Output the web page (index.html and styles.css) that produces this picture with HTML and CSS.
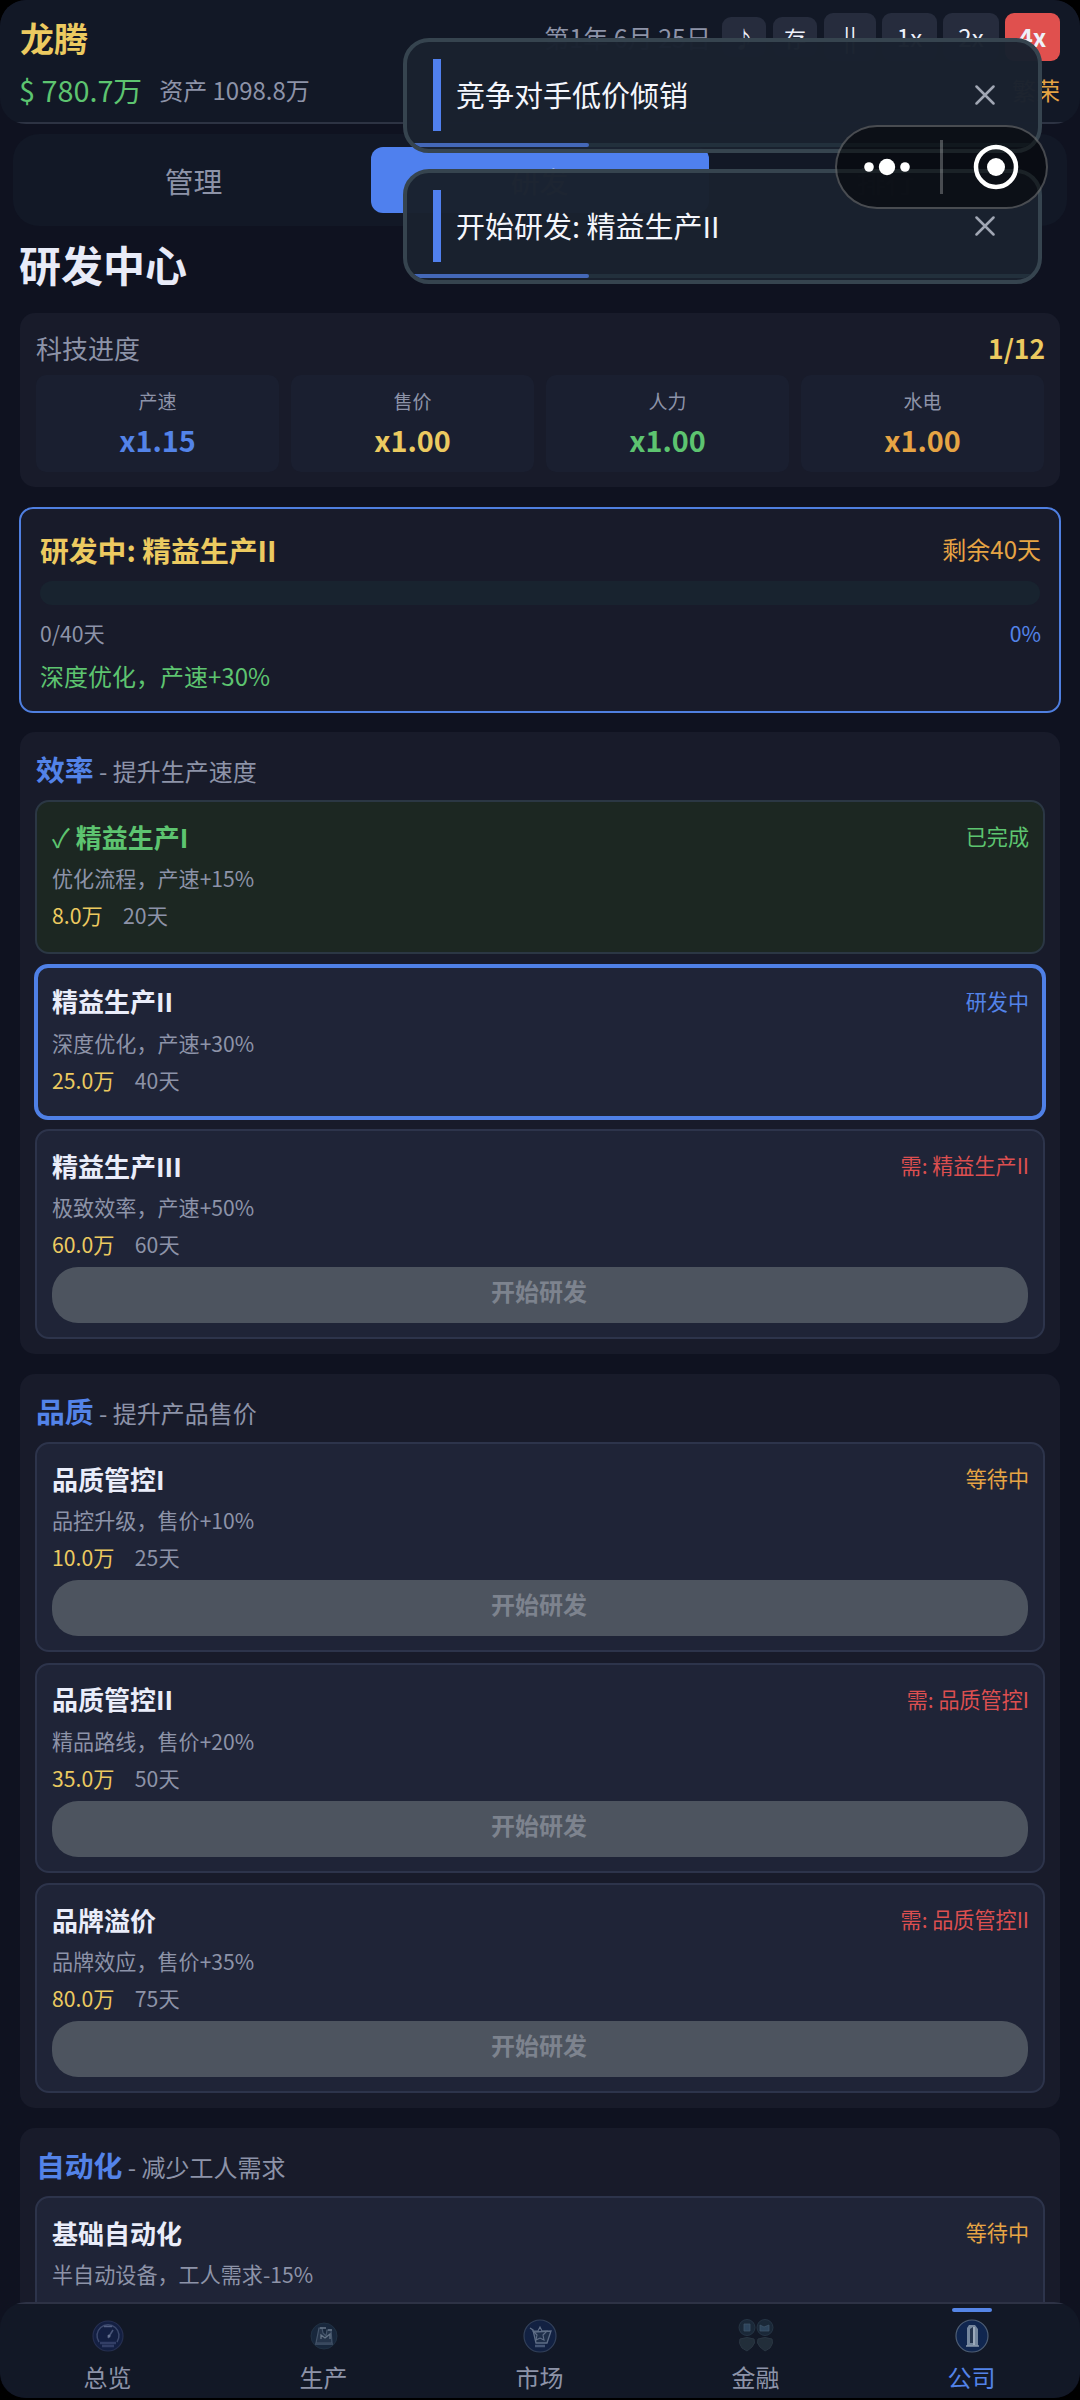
FILE: index.html
```html
<!DOCTYPE html>
<html lang="zh-CN">
<head>
<meta charset="utf-8">
<title>研发中心</title>
<link rel="stylesheet" href="styles.css">
</head>
<body>
<div class="screen">
  <header class="header">
    <div class="header-row">
      <div class="company">龙腾</div>
      <div class="controls">
        <span class="date">第1年 6月 25日</span>
        <button class="ctl ctl-small note">♪</button>
        <button class="ctl ctl-small save">存</button>
        <button class="ctl pause">||</button>
        <button class="ctl speed1">1x</button>
        <button class="ctl speed2">2x</button>
        <button class="ctl speed4">4x</button>
      </div>
    </div>
    <div class="header-row money-row">
      <div class="money"><span class="cash">$ 780.7万</span><span class="assets">资产 1098.8万</span></div>
      <span class="economy">繁荣</span>
    </div>
  </header>

  <main class="main">
    <nav class="tabs">
      <div class="tab">管理</div>
      <div class="tab tab-active">研发</div>
      <div class="tab">排行</div>
    </nav>
    <h1 class="title">研发中心</h1>

    <section class="panel progress-panel">
      <div class="row">
        <span class="panel-label">科技进度</span>
        <span class="count">1/12</span>
      </div>
      <div class="stats">
        <div class="stat"><span class="stat-name">产速</span><b class="blue">x1.15</b></div>
        <div class="stat"><span class="stat-name">售价</span><b class="yellow">x1.00</b></div>
        <div class="stat"><span class="stat-name">人力</span><b class="green">x1.00</b></div>
        <div class="stat"><span class="stat-name">水电</span><b class="orange">x1.00</b></div>
      </div>
    </section>

    <section class="current">
      <div class="row current-head">
        <span class="current-name">研发中: 精益生产II</span>
        <span class="current-left">剩余40天</span>
      </div>
      <div class="bar"></div>
      <div class="row current-days">
        <span>0/40天</span>
        <span class="blue">0%</span>
      </div>
      <div class="current-desc">深度优化，产速+30%</div>
    </section>

    <section class="panel group">
      <h2 class="group-head">效率<small> - 提升生产速度</small></h2>
      <div class="item item-done">
        <div class="row item-head"><span class="green"><span class="check">✓</span> 精益生产I</span><span class="tag green">已完成</span></div>
        <div class="desc">优化流程，产速+15%</div>
        <div class="cost"><span class="yellow">8.0万</span><span>20天</span></div>
      </div>
      <div class="item item-active">
        <div class="row item-head"><span>精益生产II</span><span class="tag blue">研发中</span></div>
        <div class="desc">深度优化，产速+30%</div>
        <div class="cost"><span class="yellow">25.0万</span><span>40天</span></div>
      </div>
      <div class="item">
        <div class="row item-head"><span>精益生产III</span><span class="tag red">需: 精益生产II</span></div>
        <div class="desc">极致效率，产速+50%</div>
        <div class="cost"><span class="yellow">60.0万</span><span>60天</span></div>
        <button class="start">开始研发</button>
      </div>
    </section>

    <section class="panel group">
      <h2 class="group-head">品质<small> - 提升产品售价</small></h2>
      <div class="item">
        <div class="row item-head"><span>品质管控I</span><span class="tag orange">等待中</span></div>
        <div class="desc">品控升级，售价+10%</div>
        <div class="cost"><span class="yellow">10.0万</span><span>25天</span></div>
        <button class="start">开始研发</button>
      </div>
      <div class="item">
        <div class="row item-head"><span>品质管控II</span><span class="tag red">需: 品质管控I</span></div>
        <div class="desc">精品路线，售价+20%</div>
        <div class="cost"><span class="yellow">35.0万</span><span>50天</span></div>
        <button class="start">开始研发</button>
      </div>
      <div class="item">
        <div class="row item-head"><span>品牌溢价</span><span class="tag red">需: 品质管控II</span></div>
        <div class="desc">品牌效应，售价+35%</div>
        <div class="cost"><span class="yellow">80.0万</span><span>75天</span></div>
        <button class="start">开始研发</button>
      </div>
    </section>

    <section class="panel group">
      <h2 class="group-head">自动化<small> - 减少工人需求</small></h2>
      <div class="item">
        <div class="row item-head"><span>基础自动化</span><span class="tag orange">等待中</span></div>
        <div class="desc">半自动设备，工人需求-15%</div>
      </div>
    </section>
  </main>

  <nav class="bottom-nav">
    <div class="nav-item">
      <svg class="nav-icon" viewBox="0 0 36 36">
        <circle cx="18" cy="18" r="15" fill="#14214a" stroke="#2b355a" stroke-width="1.2"/>
        <path d="M9 24a11 11 0 1 1 18 0" fill="none" stroke="#47557e" stroke-width="1.5"/>
        <path d="M14 8.500h8" stroke="#63719a" stroke-width="1.500"/>
        <path d="M18 20l5-8" stroke="#59678f" stroke-width="1.500"/>
        <circle cx="19" cy="18" r="1.500" fill="#7d8bae"/>
        <path d="M10 25h16M12 28h12" stroke="#3b4877" stroke-width="2.500"/>
      </svg>
      <span>总览</span>
    </div>
    <div class="nav-item">
      <svg class="nav-icon" viewBox="0 0 36 36">
        <circle cx="18" cy="18" r="13" fill="#1a2b42" stroke="#25374a"/>
        <path d="M10 25l2-10 1-5h3l1 5 3 3 1-6h4l1 13z" fill="#2a3c54" stroke="#52657d" stroke-width="1.200"/>
        <path d="M14 10h6M22 12h4M15 21v-4l4 3 5-4v5" fill="none" stroke="#7b8ca0" stroke-width="1.300"/>
        <path d="M9 26h18" stroke="#43566e" stroke-width="2"/>
      </svg>
      <span>生产</span>
    </div>
    <div class="nav-item">
      <svg class="nav-icon" viewBox="0 0 36 36">
        <circle cx="18" cy="18" r="16" fill="#13244a" stroke="#3a4a66" stroke-width="1.200"/>
        <path d="M8 10l3 2 3 13h11l4-12-17 1" fill="#233554" stroke="#7384a0" stroke-width="1.300"/>
        <path d="M18 9l2 4h5l-4 4 1 5-4-2-4 2 1-5-4-4h5z" fill="none" stroke="#7585a0" stroke-width="1.100"/>
        <path d="M13 28h10" stroke="#52668a" stroke-width="2.500"/>
      </svg>
      <span>市场</span>
    </div>
    <div class="nav-item">
      <svg class="nav-icon" viewBox="0 0 36 36">
        <circle cx="9" cy="9.500" r="8" fill="#1d2c3d" stroke="#2b3c4c"/>
        <circle cx="27" cy="9.500" r="8" fill="#1d2c3d" stroke="#2b3c4c"/>
        <path d="M6 6h6v7H6zM22 7l4 2 5-2v6h-9z" fill="#34506a" stroke="#49637a" stroke-width=".800"/>
        <path d="M2 21q7-3 14 0 2 4-2 8l-5 4-5-3q-4-5-2-9zM20 21q7-3 14 0 2 4-2 9l-5 3-5-4q-4-4-2-8z" fill="#27343f" stroke="#303d4a"/>
      </svg>
      <span>金融</span>
    </div>
    <div class="nav-item nav-active">
      <svg class="nav-icon" viewBox="0 0 36 36">
        <circle cx="18" cy="18" r="16" fill="#10264f" stroke="#4d5d74" stroke-width="1.200"/>
        <path d="M13 28V10l2-3h6l3 4v17z" fill="#74869d"/>
        <path d="M16 25V11l3-2v16z" fill="#26364f"/>
        <path d="M20 9v18" stroke="#a8b5c4" stroke-width="1.500"/>
        <path d="M12 28h13" stroke="#8998ad" stroke-width="1.500"/>
      </svg>
      <span>公司</span>
    </div>
  </nav>

  <div class="toasts">
    <div class="toast">
      <i class="toast-mark"></i><span class="toast-text">竞争对手低价倾销</span>
      <svg class="toast-close" viewBox="0 0 20 20"><path d="M1.500 1.500l17 17M18.500 1.500l-17 17"/></svg>
      <div class="toast-track"><div class="toast-fill"></div></div>
    </div>
    <div class="toast">
      <i class="toast-mark"></i><span class="toast-text">开始研发: 精益生产II</span>
      <svg class="toast-close" viewBox="0 0 20 20"><path d="M1.500 1.500l17 17M18.500 1.500l-17 17"/></svg>
      <div class="toast-track"><div class="toast-fill"></div></div>
    </div>
  </div>

  <div class="capsule">
    <svg class="dots" viewBox="0 0 46 18"><circle cx="5" cy="9" r="4.800"/><circle cx="23" cy="9" r="8.200"/><circle cx="41" cy="9" r="4.800"/></svg>
    <i class="capsule-line"></i>
    <svg class="target" viewBox="0 0 46 46"><circle cx="23" cy="23" r="20" fill="none" stroke="#fff" stroke-width="4.500"/><circle cx="23" cy="23" r="9" fill="#fff"/></svg>
  </div>
</div>
</body>
</html>
```
FILE: styles.css
```css
* { box-sizing: border-box; }
html, body { margin: 0; background: #000; }
body { font-family: "Noto Sans CJK SC", sans-serif; color: #8d93a8; }
button { font-family: inherit; border: 0; padding: 0; margin: 0; color: inherit; }
h1, h2 { margin: 0; }

.screen {
  position: relative; width: 1080px; height: 2400px; overflow: hidden;
  display: flex; flex-direction: column;
  background: #0f1220; border-radius: 26px; border-bottom: 2px solid #000;
}
.row { display: flex; justify-content: space-between; align-items: center; }
.blue { color: #5383e8; }
.yellow { color: #ecca60; }
.green { color: #5dc470; }
.orange { color: #e6a444; }
.red { color: #dc4f50; }

.header {
  height: 124px; flex: none; padding: 14px 20px 0; border-radius: 26px;
  background: linear-gradient(#2d3343, #2d3343) left bottom / 100% 2px no-repeat #121826;
}
.header-row { display: flex; justify-content: space-between; align-items: center; height: 48px; }
.company { font-size: 34px; font-weight: 700; color: #ecca60; line-height: 48px; }
.controls { display: flex; align-items: center; margin-top: -2px; }
.date { font-size: 25px; margin-right: 11px; }
.ctl {
  height: 48px; border-radius: 9px; background: #262c3d; color: #eef1fa;
  font-size: 24px; line-height: 44px; margin-left: 6px;
}
.ctl-small { height: 40px; width: 44px; line-height: 38px; font-size: 22px; margin: 0 0 0 7px; }
.ctl-small.note { margin-left: 0; }
.pause { width: 52px; margin-left: 7px; }
.speed1 { width: 55px; }
.speed2 { width: 56px; }
.speed4 { width: 55px; background: #e0504e; font-weight: 700; }
.money-row { height: 40px; margin-top: 7px; }
.money { display: flex; align-items: center; gap: 17px; margin-left: -1px; }
.cash { font-size: 28.800px; color: #5dc470; }
.assets { font-size: 24px; }
.economy { font-size: 24px; color: #e6a444; }

.main { flex: 1; min-height: 0; overflow: hidden; padding: 10px 20px 0; }
.tabs {
  display: flex; gap: 8px; height: 92px; padding: 13px 12px; margin: 0 -7px;
  border-radius: 26px; background: #121826;
}
.tab { flex: 1; height: 66px; line-height: 68px; padding-right: 1px; border-radius: 12px; text-align: center; font-size: 28.800px; }
.tab-active { background: #4f80ee; color: #fff; }
.title { margin: 7px 0 18px -1px; line-height: 62px; font-size: 42px; font-weight: 700; color: #e8ebf8; }

.panel { background: #181b2a; border-radius: 15px; padding: 15px; }
.progress-panel { height: 174px; padding: 13px 16px 15px; margin-bottom: 20px; }
.progress-panel .row { height: 42px; }
.panel-label { font-size: 26px; }
.count { font-size: 26.400px; font-weight: 700; color: #ecca60; margin-right: -1px; }
.stats { display: grid; grid-template-columns: repeat(4, 1fr); gap: 12px; margin-top: 7px; }
.stat {
  height: 97px; border-radius: 10px; background: #1a1f30; padding-top: 11px;
  display: flex; flex-direction: column; align-items: center;
}
.stat-name { font-size: 19px; line-height: 30px; }
.stat b { font-size: 28.800px; line-height: 47px; }

.current {
  height: 206px; margin: 0 -1px 19px; padding: 20px 19px 0;
  background: #181b2a; border: 2px solid #4f7fe0; border-radius: 14px;
}
.current-head { height: 40px; }
.current-name { font-size: 28.800px; font-weight: 700; color: #ecca60; }
.current-left { font-size: 24px; color: #e6a444; margin: -1px -1px 0 0; }
.bar { height: 24px; margin-top: 12px; border-radius: 12px; background: #18232f; }
.current-days { height: 34px; margin: 10px -1px 0 0; font-size: 21.200px; }
.current-desc { margin-top: 9px; line-height: 36px; font-size: 24px; color: #5dc470; }

.group { margin-bottom: 20px; display: flex; flex-direction: column; gap: 10.5px; }
.group-head { height: 44px; font-size: 28.800px; line-height: 43px; font-weight: 700; color: #5383e8; margin: 0 1px -1.500px; }
.group-head small { font-size: 24px; line-height: 1; font-weight: 400; color: #8d93a8; }
.item {
  min-height: 154px; padding: 16px 15px 14px;
  background: #1f2437; border: 2px solid #2d344b; border-radius: 14px;
}
.item-done { background: #1c2722; border-color: #2b3744; }
.item-active { border: 4px solid #4f80e6; margin: -1px; padding: 15px 14px; min-height: 156px; }
.item-head { height: 36px; font-size: 26px; font-weight: 700; color: #eaedfa; }
.check { font-weight: 400; }
.tag { font-size: 21.100px; font-weight: 400; margin-right: -1px; }
.desc { margin-top: 6px; line-height: 36px; font-size: 21.100px; }
.cost { display: flex; gap: 20.5px; margin-top: 2px; line-height: 34px; font-size: 21.200px; }
.start {
  display: block; width: 100%; height: 56px; margin-top: 6px; padding: 0 2px 9px 0;
  border-radius: 26px; background: #4d545f; color: #7d838e; font-size: 24px; font-weight: 700;
}

.bottom-nav {
  height: 96px; flex: none; display: flex; border-radius: 26px;
  background: linear-gradient(#2d3245, #2d3245) left top / 100% 2px no-repeat #121826;
}
.nav-item { position: relative; flex: 1; display: flex; flex-direction: column; align-items: center; padding: 16px 1px 0 0; font-size: 24px; line-height: 36px; }
.nav-icon { width: 36px; height: 36px; margin-bottom: 5px; opacity: .8; }
.nav-active { color: #5383e8; }
.nav-active .nav-icon { opacity: 1; }
.nav-active::before {
  content: ""; position: absolute; top: 6px; left: 50%; width: 40px; height: 4px;
  margin-left: -20px; border-radius: 2px; background: #5585e6;
}

.toasts { position: absolute; left: 403px; top: 38px; width: 639px; display: flex; flex-direction: column; gap: 16px; }
.toast {
  position: relative; height: 115px; overflow: hidden; display: flex; align-items: center;
  padding: 0 43px 1px 26px; border: 4px solid #36444f; border-radius: 26px;
  background: rgba(25, 34, 47, .985); color: #f4f6fc; font-size: 29px;
}
.toast-mark { width: 8px; height: 72px; margin-right: 15px; background: #5080ee; }
.toast-text { flex: 1; margin-top: -2px; }
.toast-close { width: 20px; height: 20px; fill: none; stroke: #a0a6b3; stroke-width: 2.500; stroke-linecap: round; }
.toast-track { position: absolute; left: 0; right: 0; bottom: 2px; height: 4px; background: #22303c; }
.toast-fill { width: 182px; height: 4px; border-radius: 0 2px 2px 0; background: #4468b8; }

.capsule {
  position: absolute; left: 835px; top: 125px; width: 213px; height: 84px;
  display: flex; align-items: center; padding-left: 27px;
  border: 2px solid rgba(255, 255, 255, .25); border-radius: 42px; background: rgba(0, 0, 0, .5);
}
.dots { width: 46px; height: 18px; fill: #fff; }
.capsule-line { width: 3px; height: 54px; margin: 0 30px; background: rgba(255, 255, 255, .25); }
.target { width: 46px; height: 46px; }
```
